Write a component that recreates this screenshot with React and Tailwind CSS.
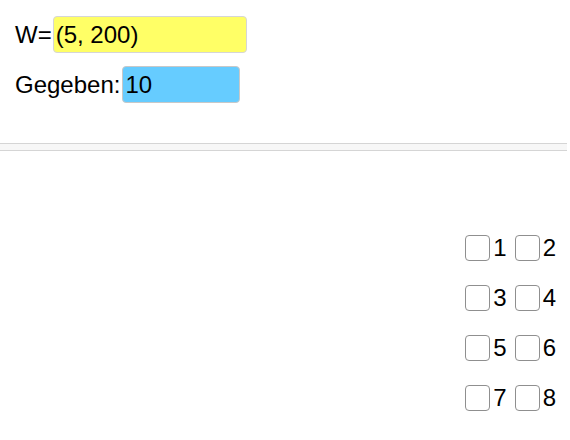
import React, { useState } from 'react';

const Box = ({ n, checked, onToggle }) => (
  <label className="flex items-center">
    <input type="checkbox" checked={checked} onChange={onToggle} className="sr-only" />
    <span className="block w-[25px] h-[26px] rounded-[4px] border border-[#8f8f8f] bg-white mr-[3px]" />
    <span>{n}</span>
  </label>
);

const App = () => {
  const [checked, setChecked] = useState({});
  const toggle = (n) => setChecked({ ...checked, [n]: !checked[n] });

  const rows = [[1, 2], [3, 4], [5, 6], [7, 8]];

  return (
    <div className="w-[570px] h-[440px] bg-white text-black text-[24px] leading-none font-['Liberation_Sans',Arial,sans-serif] overflow-hidden">
      <div className="pt-4 pl-[15px] flex flex-col gap-[13px]">
        <div className="flex items-center">
          <span>W=</span>
          <div className="w-[194px] h-[37px] ml-px flex items-center pl-[2px] bg-[#ffff66] border border-[#d6d6d6] rounded-[4px]">(5, 200)</div>
        </div>
        <div className="flex items-center">
          <span>Gegeben:</span>
          <div className="w-[118px] h-[37px] ml-[2px] flex items-center pl-[2px] bg-[#66ccff] border border-[#c8c8c8] rounded-[4px]">10</div>
        </div>
      </div>

      <div className="mt-[40px] mr-[3px] h-[8px] bg-[#f7f7f7] border-y border-[#d5d5d5]" />

      <div className="mt-[84px] pr-[14px] flex flex-col items-end gap-[24px]">
        {rows.map((r) => (
          <div key={r[0]} className="flex items-center gap-[8px]">
            {r.map((n) => (
              <Box key={n} n={n} checked={!!checked[n]} onToggle={() => toggle(n)} />
            ))}
          </div>
        ))}
      </div>
    </div>
  );
};

export default App;
